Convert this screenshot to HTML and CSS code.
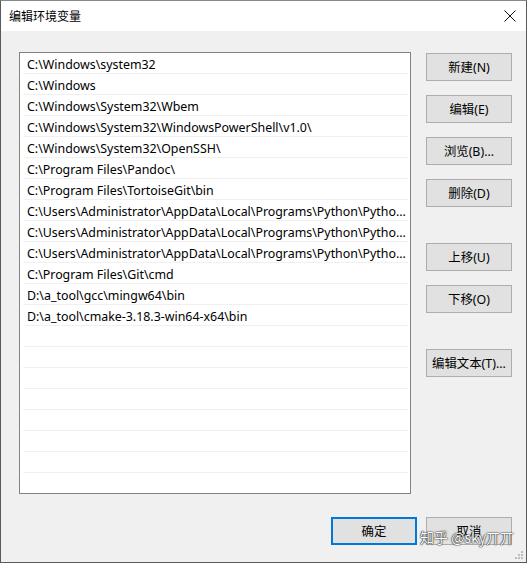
FILE: index.html
```html
<!DOCTYPE html>
<html lang="zh-CN">
<head>
<meta charset="UTF-8">
<title>编辑环境变量</title>
<link rel="stylesheet" href="styles.css">
</head>
<body>
<div class="window">
  <div class="titlebar">
    <span class="title">编辑环境变量</span>
    <svg class="close" width="12" height="12" viewBox="0 0 12 12"><path d="M0.5 0.5 L11.5 11.5 M11.5 0.5 L0.5 11.5" stroke="#111" stroke-width="1" fill="none"/></svg>
  </div>
  <div class="content">
    <div class="main">
      <div class="path-list">
        <div class="row">C:\Windows\system32</div>
        <div class="row">C:\Windows</div>
        <div class="row">C:\Windows\System32\Wbem</div>
        <div class="row">C:\Windows\System32\WindowsPowerShell\v1.0\</div>
        <div class="row">C:\Windows\System32\OpenSSH\</div>
        <div class="row">C:\Program Files\Pandoc\</div>
        <div class="row">C:\Program Files\TortoiseGit\bin</div>
        <div class="row">C:\Users\Administrator\AppData\Local\Programs\Python\Python38\Scripts\</div>
        <div class="row">C:\Users\Administrator\AppData\Local\Programs\Python\Python38\</div>
        <div class="row">C:\Users\Administrator\AppData\Local\Programs\Python\Python37\Scripts\</div>
        <div class="row">C:\Program Files\Git\cmd</div>
        <div class="row">D:\a_tool\gcc\mingw64\bin</div>
        <div class="row">D:\a_tool\cmake-3.18.3-win64-x64\bin</div>
        <div class="row"></div>
        <div class="row"></div>
        <div class="row"></div>
        <div class="row"></div>
        <div class="row"></div>
        <div class="row"></div>
        <div class="row"></div>
        <div class="row"></div>
      </div>
      <div class="side">
        <button class="btn">新建(N)</button>
        <button class="btn">编辑(E)</button>
        <button class="btn">浏览(B)...</button>
        <button class="btn">删除(D)</button>
        <button class="btn group">上移(U)</button>
        <button class="btn">下移(O)</button>
        <button class="btn group">编辑文本(T)...</button>
      </div>
    </div>
    <div class="footer">
      <button class="btn default">确定</button>
      <button class="btn">取消</button>
    </div>
    <span class="watermark">知乎 @sky丌丌</span>
    <svg class="grip" width="8" height="8" viewBox="0 0 8 8">
      <rect x="6" y="0" width="2" height="2" fill="#bcbcbc"/>
      <rect x="3" y="3" width="2" height="2" fill="#bcbcbc"/>
      <rect x="6" y="3" width="2" height="2" fill="#bcbcbc"/>
      <rect x="0" y="6" width="2" height="2" fill="#bcbcbc"/>
      <rect x="3" y="6" width="2" height="2" fill="#bcbcbc"/>
      <rect x="6" y="6" width="2" height="2" fill="#bcbcbc"/>
    </svg>
  </div>
</div>
</body>
</html>
```

FILE: styles.css
```css
body { margin: 0; padding: 0; background-color: #f0f0f0; font-family: "Noto Sans", "Noto Sans CJK SC", sans-serif; font-size: 12px; color: #000; }
.window { box-sizing: border-box; width: 527px; height: 563px; display: flex; flex-direction: column; border: 1px solid #5a5a5a; border-top-color: #8a8a8a; }
.titlebar { height: 30px; flex: none; display: flex; align-items: center; justify-content: space-between; background-color: #fff; padding: 0 10px 0 8px; }
.title { font-family: "Noto Sans CJK SC", sans-serif; font-size: 12px; margin-top: -1px; }
.close { display: block; }
.content { flex: 1; position: relative; background-color: #f0f0f0; }
.main { display: flex; padding: 21px 0 0 18px; }
.path-list { box-sizing: border-box; width: 392px; height: 442px; border: 1px solid #828282; background-color: #fff; padding: 0 2px 0 3px; overflow: hidden; }
.row { box-sizing: border-box; height: 21px; line-height: 17px; padding: 3px 0 0 4px; border-bottom: 1px solid #f0f0f0; font-size: 12.4px; white-space: nowrap; overflow: hidden; text-overflow: ellipsis; }
.side { display: flex; flex-direction: column; margin-left: 15px; padding-top: 1px; gap: 14px; }
.side .group { margin-top: 22px; }
.btn { box-sizing: border-box; width: 86px; height: 28px; padding: 0; background-color: #e1e1e1; border: 1px solid #adadad; font-family: "Noto Sans", "Noto Sans CJK SC", sans-serif; font-size: 12.4px; color: #000; }
.btn.default { border: 2px solid #0078d7; }
.footer { display: flex; justify-content: flex-end; gap: 9px; padding: 23px 14px 0 0; }
.watermark { position: absolute; right: 12px; bottom: 15px; font-family: "Noto Sans CJK SC", sans-serif; font-size: 14px; color: #fff; text-shadow: 0 0 1px #222, 0 0 1px #222, 0 0 2px #444; }
.grip { position: absolute; right: 3px; bottom: 3px; }
```
